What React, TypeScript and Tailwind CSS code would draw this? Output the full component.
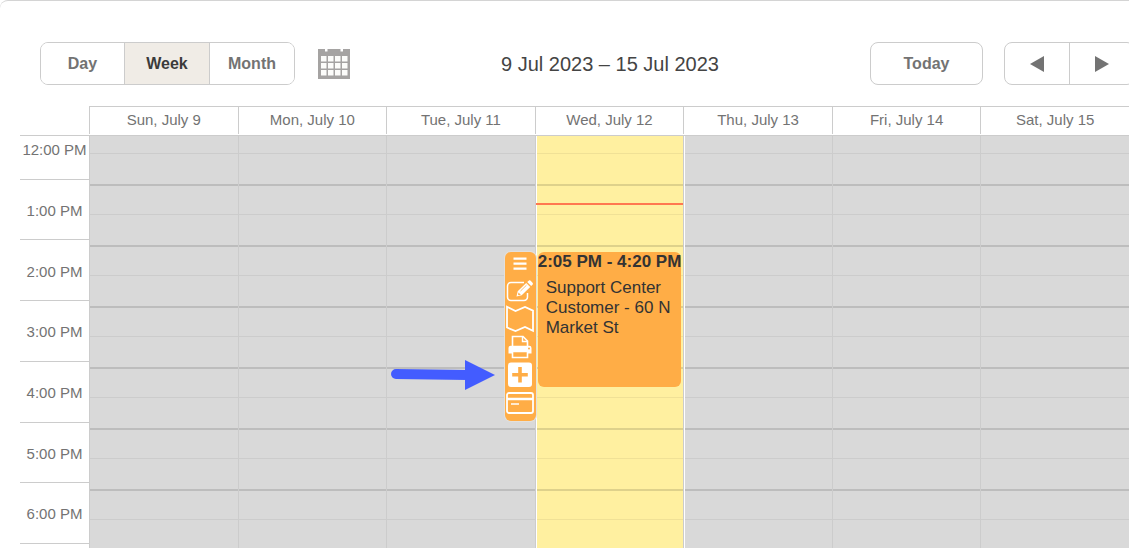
import React from "react";

interface Day {
    label: string;
    isToday?: boolean;
    afterToday?: boolean;
}

const days: Day[] = [
    { label: "Sun, July 9" },
    { label: "Mon, July 10" },
    { label: "Tue, July 11" },
    { label: "Wed, July 12", isToday: true },
    { label: "Thu, July 13", afterToday: true },
    { label: "Fri, July 14" },
    { label: "Sat, July 15" },
];

const hours = [
    "12:00 PM",
    "1:00 PM",
    "2:00 PM",
    "3:00 PM",
    "4:00 PM",
    "5:00 PM",
    "6:00 PM",
];

const views = ["Day", "Week", "Month"];

const CalendarIcon = () => (
    <svg width="32" height="30" viewBox="0 0 32 30" aria-hidden="true">
        <path d="M0 0h7v2.500h2.500V0h13v2.500H25V0h7v30H0z" fill="#a5a3a2" />
        {[7, 14, 21].map((y) =>
            [3, 10, 17, 24].map((x) => (
                <rect
                    key={`${x}-${y}`}
                    x={x}
                    y={y}
                    width="5.5"
                    height="5.5"
                    fill="#fcfcfa"
                />
            ))
        )}
    </svg>
);

const MenuIcon = () => (
    <svg width="28" height="24" viewBox="0 0 28 24" fill="#fff">
        <path d="M7.500 4.500h13v2.200h-13zM7.500 9.500h13v2.200h-13zM7.500 14.500h13v2.200h-13z" />
    </svg>
);

const EditIcon = () => (
    <svg width="28" height="26" viewBox="0 0 28 26" fill="none">
        <path
            d="M18 4.500H5a3.500 3.500 0 0 0-3.500 3.500v11A3.500 3.500 0 0 0 5 22.500h13a3.500 3.500 0 0 0 3.500-3.500v-4"
            stroke="#fff"
            strokeWidth="1.500"
        />
        <path
            d="M10.500 18.500l1.200-5.300L20.200 5l4 4-8.500 8.300zM21.200 4l1.500-1.300c.7-.6 1.500-.5 2 .1l1.800 1.900c.6.600.6 1.400 0 2L25.200 8z"
            fill="#fff"
        />
        <path d="M12.500 14.500l2.300 2.300-2 .5-.8-.8z" fill="#ffad46" />
        <path d="M14.500 13l6-5.800" stroke="#ffad46" strokeWidth="0.800" />
    </svg>
);

const MapIcon = () => (
    <svg width="28" height="28" viewBox="0 0 28 28" fill="none">
        <path
            d="M1 1.800L9.500 6l9.500-4 8 3.600v20.300L19 22l-9.500 4L1 22.500z"
            stroke="#fff"
            strokeWidth="1.800"
        />
    </svg>
);

const PrintIcon = () => (
    <svg width="28" height="24" viewBox="0 0 28 24" fill="none">
        <path d="M6.500 12V1.500h10.500l4.500 4.500v6" stroke="#fff" strokeWidth="1.600" />
        <path d="M16.500 1.500v5h5" stroke="#fff" strokeWidth="1.400" />
        <path
            d="M2.500 18.500V13a2.200 2.200 0 0 1 2.200-2.200h18.600a2.200 2.200 0 0 1 2.200 2.200v5.500z"
            fill="#fff"
        />
        <path
            d="M6.500 16.500h15v6h-15z"
            fill="#ffad46"
            stroke="#fff"
            strokeWidth="1.600"
        />
        <circle cx="23" cy="13.500" r="1" fill="#ffad46" />
    </svg>
);

const PlusIcon = () => (
    <svg width="28" height="26" viewBox="0 0 28 26">
        <rect x="2" y="0.500" width="24" height="24.500" rx="3" fill="#fff" />
        <path d="M12.200 5h3.600v6h6v3.600h-6v6h-3.600v-6h-6V11h6z" fill="#ffad46" />
    </svg>
);

const CardIcon = () => (
    <svg width="28" height="24" viewBox="0 0 28 24" fill="none">
        <rect
            x="1"
            y="2"
            width="26"
            height="20"
            rx="2"
            stroke="#fff"
            strokeWidth="1.800"
        />
        <path d="M1 8h26" stroke="#fff" strokeWidth="2.500" />
        <path d="M5 13h8" stroke="#fff" strokeWidth="1.500" />
    </svg>
);

const eventActions = [
    { label: "Details", icon: <MenuIcon /> },
    { label: "Edit", icon: <EditIcon /> },
    { label: "Map", icon: <MapIcon /> },
    { label: "Print", icon: <PrintIcon /> },
    { label: "Add", icon: <PlusIcon /> },
    { label: "Payment", icon: <CardIcon /> },
];

const Toolbar = () => (
    <header className="flex items-center justify-between pl-10 -mr-[6px]">
        <div className="flex items-center gap-[23px]">
            <div className="flex h-[43px] divide-x divide-[#ccc] overflow-hidden rounded-lg border border-[#ccc]">
                {views.map((view) => (
                    <button
                        key={view}
                        type="button"
                        className={
                            view === "Week"
                                ? "w-[85px] bg-[#f0ece6] text-base font-bold text-[#3b3b3b]"
                                : "w-[84px] bg-white text-base font-bold text-[#737373]"
                        }
                    >
                        {view}
                    </button>
                ))}
            </div>
            <button type="button" aria-label="Pick a date">
                <CalendarIcon />
            </button>
        </div>
        <h1 className="text-xl text-[#444]">9 Jul 2023 – 15 Jul 2023</h1>
        <div className="flex gap-[21px]">
            <button
                type="button"
                className="h-[43px] w-[113px] rounded-lg border border-[#ccc] bg-white text-base font-bold text-[#737373]"
            >
                Today
            </button>
            <div className="flex h-[43px] divide-x divide-[#ccc] rounded-lg border border-[#ccc]">
                <button
                    type="button"
                    aria-label="Previous week"
                    className="flex w-[65px] items-center justify-center"
                >
                    <svg width="14" height="18" viewBox="0 0 14 18">
                        <path d="M14 1v16L0 9z" fill="#737373" />
                    </svg>
                </button>
                <button
                    type="button"
                    aria-label="Next week"
                    className="flex w-[64px] items-center justify-center"
                >
                    <svg width="14" height="18" viewBox="0 0 14 18">
                        <path d="M0 1v16l14-8z" fill="#737373" />
                    </svg>
                </button>
            </div>
        </div>
    </header>
);

const CalendarEvent = () => (
    <>
        <article className="absolute top-[116px] right-[2px] left-[2px] h-[135px] rounded-md bg-[#ffad46] leading-5 text-[#333]">
            <h2 className="text-[17px] font-bold whitespace-nowrap">
                2:05 PM - 4:20 PM
            </h2>
            <p className="px-2 pt-[6px] text-[17px]">
                Support Center Customer - 60 N Market St
            </p>
        </article>
        <div className="absolute top-[116px] right-full flex items-end gap-[10px]">
            <svg
                width="104"
                height="30"
                viewBox="0 0 104 30"
                className="mb-[31px]"
                aria-hidden="true"
            >
                <path
                    d="M5 14l72 1"
                    stroke="#435cff"
                    strokeWidth="10"
                    strokeLinecap="round"
                />
                <path d="M74 0l30 15-30 15z" fill="#435cff" />
            </svg>
            <div className="flex w-[31px] flex-col rounded-md bg-[#ffad46] pr-px pb-1 ring-1 ring-[#e3e0dc]">
                {eventActions.map((action) => (
                    <button
                        key={action.label}
                        type="button"
                        aria-label={action.label}
                        className="flex h-7 items-center justify-center first:h-[25px]"
                    >
                        {action.icon}
                    </button>
                ))}
            </div>
        </div>
    </>
);

const DayColumn = ({ day }: { day: Day }) => (
    <div
        className={
            day.isToday
                ? "relative border-l border-[#ccc] bg-[#fff0a0]"
                : "relative border-l border-[#ccc] bg-[#d9d9d9]"
        }
    >
        <div className={day.isToday || day.afterToday ? "border-l border-white" : ""}>
            {hours.map((hour) => (
                <div key={hour} className="group">
                    <div className="h-[29px] border-b border-black/6 group-first:h-[18px]" />
                    <div className="h-[32px] border-b-2 border-black/13" />
                </div>
            ))}
        </div>
        {day.isToday && (
            <>
                <div className="absolute inset-x-0 top-[67px] h-[2px] bg-[#ff7850]" />
                <CalendarEvent />
            </>
        )}
    </div>
);

const App: React.FC = () => {
    return (
        <main className="flex h-screen flex-col overflow-hidden rounded-tl-lg border-t border-[#d4d4d4] bg-white pt-[41px] font-['Liberation_Sans',Arial,sans-serif]">
            <Toolbar />

            <section className="mt-[21px] flex min-h-0 flex-1 flex-col pl-5">
                <div className="flex border-b border-[#ccc] pb-px">
                    <div className="w-[69px] shrink-0" />
                    <div className="grid flex-1 grid-cols-7 border-t border-[#ccc]">
                        {days.map((day) => (
                            <div
                                key={day.label}
                                className="h-[27px] border-l border-[#ccc] text-center text-[15px] leading-[26px] text-[#737373]"
                            >
                                {day.label}
                            </div>
                        ))}
                    </div>
                </div>

                <div className="flex min-h-0 flex-1 overflow-hidden">
                    {/* first hour is partly scrolled out of view */}
                    <div className="-mt-[17px] grid h-[425px] w-[69px] shrink-0 grid-rows-7">
                        {hours.map((hour) => (
                            <div
                                key={hour}
                                className="flex items-center justify-center border-b border-[#ccc] pt-[3px] text-[15px] text-[#737373]"
                            >
                                {hour}
                            </div>
                        ))}
                    </div>
                    <div className="grid flex-1 grid-cols-7">
                        {days.map((day) => (
                            <DayColumn key={day.label} day={day} />
                        ))}
                    </div>
                </div>
            </section>
        </main>
    );
};

export default App;
